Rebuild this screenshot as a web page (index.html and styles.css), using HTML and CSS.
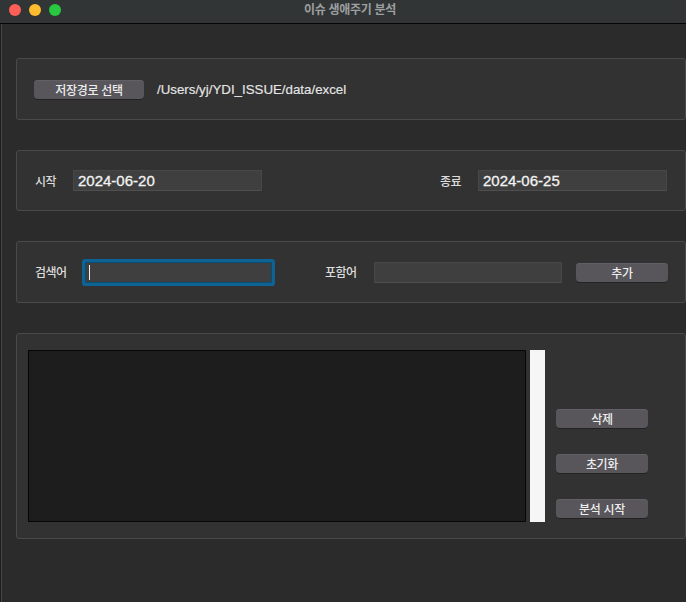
FILE: index.html
```html
<!DOCTYPE html>
<html lang="ko">
<head>
<meta charset="utf-8">
<title>이슈 생애주기 분석</title>
<link rel="stylesheet" href="styles.css">
</head>
<body>
<header class="titlebar">
  <div class="lights">
    <span class="light red"></span>
    <span class="light yellow"></span>
    <span class="light green"></span>
  </div>
  <div class="title">이슈 생애주기 분석</div>
</header>
<main class="content">
  <section class="group g-path">
    <button class="btn btn-path">저장경로 선택</button>
    <span class="path">/Users/yj/YDI_ISSUE/data/excel</span>
  </section>
  <section class="group g-date">
    <div class="field">
      <span class="lbl lbl-date">시작</span>
      <div class="input input-date">2024-06-20</div>
    </div>
    <div class="field">
      <span class="lbl lbl-date">종료</span>
      <div class="input input-date">2024-06-25</div>
    </div>
  </section>
  <section class="group g-search">
    <div class="field">
      <span class="lbl lbl-search">검색어</span>
      <div class="input input-word focused"><span class="caret"></span></div>
    </div>
    <div class="field field-right">
      <span class="lbl lbl-include">포함어</span>
      <div class="input input-word"></div>
      <button class="btn btn-add">추가</button>
    </div>
  </section>
  <section class="group g-list">
    <div class="listbox"></div>
    <div class="scrollbar"></div>
    <div class="actions">
      <button class="btn btn-action">삭제</button>
      <button class="btn btn-action">초기화</button>
      <button class="btn btn-action">분석 시작</button>
    </div>
  </section>
</main>
</body>
</html>
```
FILE: styles.css
```css
* { box-sizing: border-box; }
html, body { margin: 0; padding: 0; }
body {
  width: 686px;
  height: 602px;
  overflow: hidden;
  background: #2b2b2b;
  font-family: "Noto Sans CJK KR", "Liberation Sans", sans-serif;
  color: #dcdcdc;
}

.titlebar {
  display: grid;
  height: 24px;
  background: #323536;
  border-bottom: 1px solid #050505;
}
.lights {
  grid-area: 1 / 1;
  justify-self: start;
  display: flex;
  gap: 8px;
  padding: 4px 0 0 9px;
}
.light {
  width: 12px;
  height: 12px;
  border-radius: 50%;
}
.red { background: #fe5f57; }
.yellow { background: #febc2e; }
.green { background: #28c840; }
.title {
  grid-area: 1 / 1;
  justify-self: center;
  padding-left: 14px;
  font-size: 12px;
  font-weight: 700;
  line-height: 17px;
  letter-spacing: -0.3px;
  color: #9d9fa0;
}

.content {
  height: 578px;
  padding: 34px 0 0 16px;
  display: flex;
  flex-direction: column;
  gap: 30px;
  box-shadow: inset 1px 0 #1d1d1d, inset 2px 0 #474747;
}

.group {
  width: 670px;
  background: #323232;
  border: 1px solid #4a4a4a;
  border-radius: 3px;
  display: flex;
  align-items: center;
}

.btn {
  border: none;
  margin: 0;
  padding: 0;
  height: 19px;
  border-radius: 4px;
  background: #58555b;
  box-shadow: 0 1px 0 #232323, inset 0 1px 0 #625f66;
  color: #ededed;
  font-family: "Noto Sans CJK KR", sans-serif;
  font-size: 12px;
  font-weight: 500;
  line-height: 19px;
  letter-spacing: -0.3px;
  text-align: center;
}

.lbl {
  font-size: 12px;
  font-weight: 500;
  letter-spacing: -0.5px;
  color: #dcdcdc;
  line-height: 16px;
}

.input {
  height: 21px;
  background: #3f3f3f;
  border: 1px solid #474747;
  border-bottom-color: #4f4f4f;
}

/* group 1 */
.g-path {
  height: 62px;
  padding-left: 17px;
  gap: 13px;
}
.btn-path { width: 110px; }
.path {
  font-family: "Liberation Sans", sans-serif;
  font-size: 13.3px;
  color: #e6e6e6;
  -webkit-text-stroke: 0.15px #e6e6e6;
}

/* group 2 */
.g-date {
  height: 61px;
  padding: 0 18px 0 18px;
  justify-content: space-between;
}
.field {
  display: flex;
  align-items: center;
}
.lbl-date { width: 38px; }
.input-date {
  width: 189px;
  padding-left: 4px;
  font-family: "Liberation Sans", sans-serif;
  font-size: 15px;
  line-height: 19px;
  color: #f2f2f2;
  -webkit-text-stroke: 0.3px #f2f2f2;
}

/* group 3 */
.g-search {
  height: 62px;
  padding: 0 17px 0 18px;
  justify-content: space-between;
}
.lbl-search { width: 50px; }
.lbl-include { width: 49px; }
.input-word { width: 188px; }
.focused {
  width: 187px;
  border-color: #0a4c72;
  border-radius: 1px;
  box-shadow: 0 0 0 3px #0c6394;
  padding: 2px 0 0 3px;
  display: flex;
}
.caret {
  width: 1px;
  height: 15px;
  background: #f0f0f0;
}
.btn-add {
  width: 92px;
  margin-left: 14px;
}

/* group 4 */
.g-list {
  height: 206px;
  padding: 16px 11px;
  align-items: stretch;
}
.listbox {
  width: 498px;
  background: #1d1d1d;
  border: 1px solid #060606;
}
.scrollbar {
  width: 15px;
  margin-left: 4px;
  background: #f6f6f6;
}
.actions {
  margin-left: 11px;
  display: flex;
  flex-direction: column;
  justify-content: flex-end;
  gap: 26px;
  padding-bottom: 4px;
}
.btn-action { width: 92px; }
```
